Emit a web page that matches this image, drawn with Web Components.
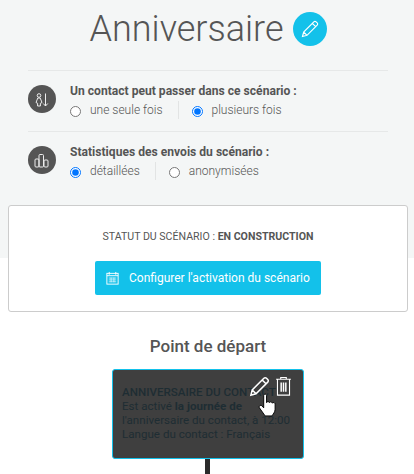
<!DOCTYPE html>
<html lang="fr">
<head>
<meta charset="utf-8">
<title>Anniversaire</title>
<style>
  html, body { margin: 0; padding: 0; background: #fff; }
  body { width: 414px; height: 474px; overflow: hidden; font-family: Roboto, "Liberation Sans", sans-serif; color: #555; }
</style>
</head>
<body>
<scenario-header title-text="Anniversaire">
  <option-row question="Un contact peut passer dans ce scénario :" icon="contact">
    <radio-choice name="passage">une seule fois</radio-choice>
    <radio-choice name="passage" checked>plusieurs fois</radio-choice>
  </option-row>
  <option-row question="Statistiques des envois du scénario :" icon="stats">
    <radio-choice name="stats" checked>détaillées</radio-choice>
    <radio-choice name="stats">anonymisées</radio-choice>
  </option-row>
</scenario-header>
<status-card status="EN CONSTRUCTION"></status-card>
<start-node>
  <strong slot="title">ANNIVERSAIRE DU CONTACT</strong>
  Est activé <b>la journée de</b><br>l'anniversaire du contact, à 12:00<br>Langue du contact : Français
</start-node>

<script>
const PENCIL = `<path d="M3 21l1.400-5.400L16.600 3.400a1.900 1.900 0 0 1 2.700 0l1.300 1.300a1.900 1.900 0 0 1 0 2.700L8.400 19.600z M14.800 5.200l4 4 M4.400 15.600l4 4"/>`;

// page head: big title, edit button and the option rows
class ScenarioHeader extends HTMLElement {
  constructor() {
    super();
    const shadow = this.attachShadow({ mode: 'open' });
    shadow.innerHTML = `
      <style>
        :host { display: block; background: #f4f6f6; height: 258px; }
        .title { display: flex; justify-content: center; align-items: center; gap: 9px; height: 58px; padding-left: 2px; }
        h1 { margin: 0; font-weight: 300; font-size: 36px; line-height: 58px; color: #555; }
        .edit { width: 34px; height: 34px; border-radius: 50%; background: #13c1ea; display: flex; align-items: center; justify-content: center; }
        svg { width: 20px; height: 20px; fill: none; stroke: #fff; stroke-width: 1.400; }
        .rows { margin: 12px 26px 0 28px; }
      </style>
      <div class="title">
        <h1></h1>
        <span class="edit"><svg viewBox="0 0 24 24">${PENCIL}</svg></span>
      </div>
      <div class="rows"><slot></slot></div>`;
    shadow.querySelector('h1').textContent = this.getAttribute('title-text');
  }
}

const ROW_ICONS = {
  contact: `<circle cx="11" cy="10.500" r="1.800"/><path d="M9.800 13h2.400l1.800 4.500-1.600 .8V21H9.600v-2.700L8 17.500z"/><path d="M17.500 8.500V21M15.200 18.500l2.300 2.500 2.300-2.500"/>`,
  stats: `<rect x="7" y="13" width="4" height="8" rx="1"/><rect x="11" y="8.500" width="4.500" height="12.500" rx="1"/><rect x="16" y="14" width="4" height="7" rx="1"/>`
};

class OptionRow extends HTMLElement {
  constructor() {
    super();
    const shadow = this.attachShadow({ mode: 'open' });
    shadow.innerHTML = `
      <style>
        :host { display: flex; align-items: center; gap: 14px; height: 60px; border-top: 1px solid #e6e8e8; }
        .icon { width: 28px; height: 28px; border-radius: 50%; background: #555; flex: none; margin-top: -4px; }
        svg { display: block; width: 28px; height: 28px; fill: none; stroke: #eee; stroke-width: 1; }
        .q { font-weight: 700; font-size: 12.100px; line-height: 17px; color: #555; white-space: nowrap; }
        .choices { display: flex; margin-top: 1px; }
        ::slotted(radio-choice:first-child) { border-right: 1px solid #e2e4e4; padding-right: 15px; margin-right: 13px; }
      </style>
      <span class="icon"><svg viewBox="0 0 28 28">${ROW_ICONS[this.getAttribute('icon')]}</svg></span>
      <div>
        <div class="q"></div>
        <div class="choices"><slot></slot></div>
      </div>`;
    shadow.querySelector('.q').textContent = this.getAttribute('question');
  }
}

class RadioChoice extends HTMLElement {
  constructor() {
    super();
    const shadow = this.attachShadow({ mode: 'open' });
    shadow.innerHTML = `
      <style>
        :host { display: inline-flex; align-items: center; height: 18px; font-size: 12px; font-weight: 300; color: #555; }
        input { margin: 2px 9px 0 0; width: 11px; height: 11px; }
      </style>
      <input type="radio" tabindex="-1"><slot></slot>`;
    shadow.querySelector('input').checked = this.hasAttribute('checked');
  }
}

class StatusCard extends HTMLElement {
  constructor() {
    super();
    const shadow = this.attachShadow({ mode: 'open' });
    shadow.innerHTML = `
      <style>
        :host { display: block; box-sizing: border-box; margin: -53px 6px 0 8px; height: 107px; background: #fff; border: 1px solid #ccc; border-radius: 3px; position: relative; text-align: center; padding-top: 23px; }
        .status { font-size: 10.600px; line-height: 15px; color: #555; }
        .status b { font-weight: 700; }
        .btn { display: flex; align-items: center; gap: 9px; box-sizing: border-box; width: 226px; height: 34px; margin: 17px auto 0; padding-left: 10px; background: #13c1ea; color: #fff; border-radius: 2px; font-size: 12px; font-weight: 400; white-space: nowrap; }
        svg { width: 15px; height: 15px; fill: none; stroke: #fff; stroke-width: 1; flex: none; }
        svg .grid { stroke-width: .7; }
      </style>
      <div class="status">STATUT DU SCÉNARIO : <b></b></div>
      <div class="btn">
        <svg viewBox="0 0 16 16"><rect x="2" y="2.500" width="12" height="11.500"/><path d="M4.500 1v3M11.500 1v3M2 5h12"/><path class="grid" d="M4 7.500h8M4 9.500h8M4 11.500h8M6.500 7v5M9.500 7v5"/></svg>
        Configurer l'activation du scénario
      </div>`;
    shadow.querySelector('b').textContent = this.getAttribute('status');
  }
}

// start box with the hover overlay (edit and delete actions, mouse pointer on top)
class StartNode extends HTMLElement {
  constructor() {
    super();
    const shadow = this.attachShadow({ mode: 'open' });
    shadow.innerHTML = `
      <style>
        :host { display: block; text-align: center; margin-top: 23px; }
        h2 { margin: 0; padding-left: 2px; font-size: 17px; line-height: 22px; font-weight: 500; color: #555; }
        .box { position: relative; box-sizing: border-box; width: 192px; height: 90px; margin: 12px auto 0 112px; background: #3f3f3f; border: 1px solid #13c1ea; border-radius: 3px; padding: 15px 9px 0; text-align: left; font-size: 11.600px; line-height: 14px; color: #1e2d33; white-space: nowrap; overflow: hidden; font-weight: 400; }
        .line { width: 5px; height: 20px; background: #2b2b2b; margin: 0 0 0 205px; }
        .pencil { position: absolute; left: 135px; top: 5px; width: 23px; height: 23px; fill: #3f3f3f; stroke: #fff; stroke-width: 1.600; }
        .trash { position: absolute; left: 162px; top: 7px; width: 17px; height: 19px; fill: none; stroke: #fff; stroke-width: 1.200; }
        .hand { position: absolute; left: 145px; top: 23px; width: 19px; height: 24px; fill: #fff; stroke: #000; stroke-width: 1; }
        ::slotted(strong) { display: block; font-weight: 500; }
      </style>
      <h2>Point de départ</h2>
      <div class="box">
        <slot name="title"></slot><slot></slot>
        <svg class="pencil" viewBox="0 0 24 24">${PENCIL}</svg>
        <svg class="trash" viewBox="1 1 18 20.500"><path d="M2 3.500h16M7 3.500V1.500h6v2M3.500 3.500V20.500h13V3.500"/><path d="M7.500 7v10M10 7v10M12.500 7v10" stroke-width="1.600"/></svg>
        <svg class="hand" viewBox="0 0 20 25"><path d="M6 2.500c0-2 3-2 3 0V10c0-1.500 3-1.500 3 0 0-1.200 3-1.200 3 .5 .3-1 3-.8 3 1V17c0 3-2 5-3.500 7H7.500L1.500 15.500c-1-1.800 1.200-3.500 2.800-2L6 15.500z"/></svg>
      </div>
      <div class="line"></div>`;
  }
}

customElements.define('scenario-header', ScenarioHeader);
customElements.define('option-row', OptionRow);
customElements.define('radio-choice', RadioChoice);
customElements.define('status-card', StatusCard);
customElements.define('start-node', StartNode);
</script>
</body>
</html>
